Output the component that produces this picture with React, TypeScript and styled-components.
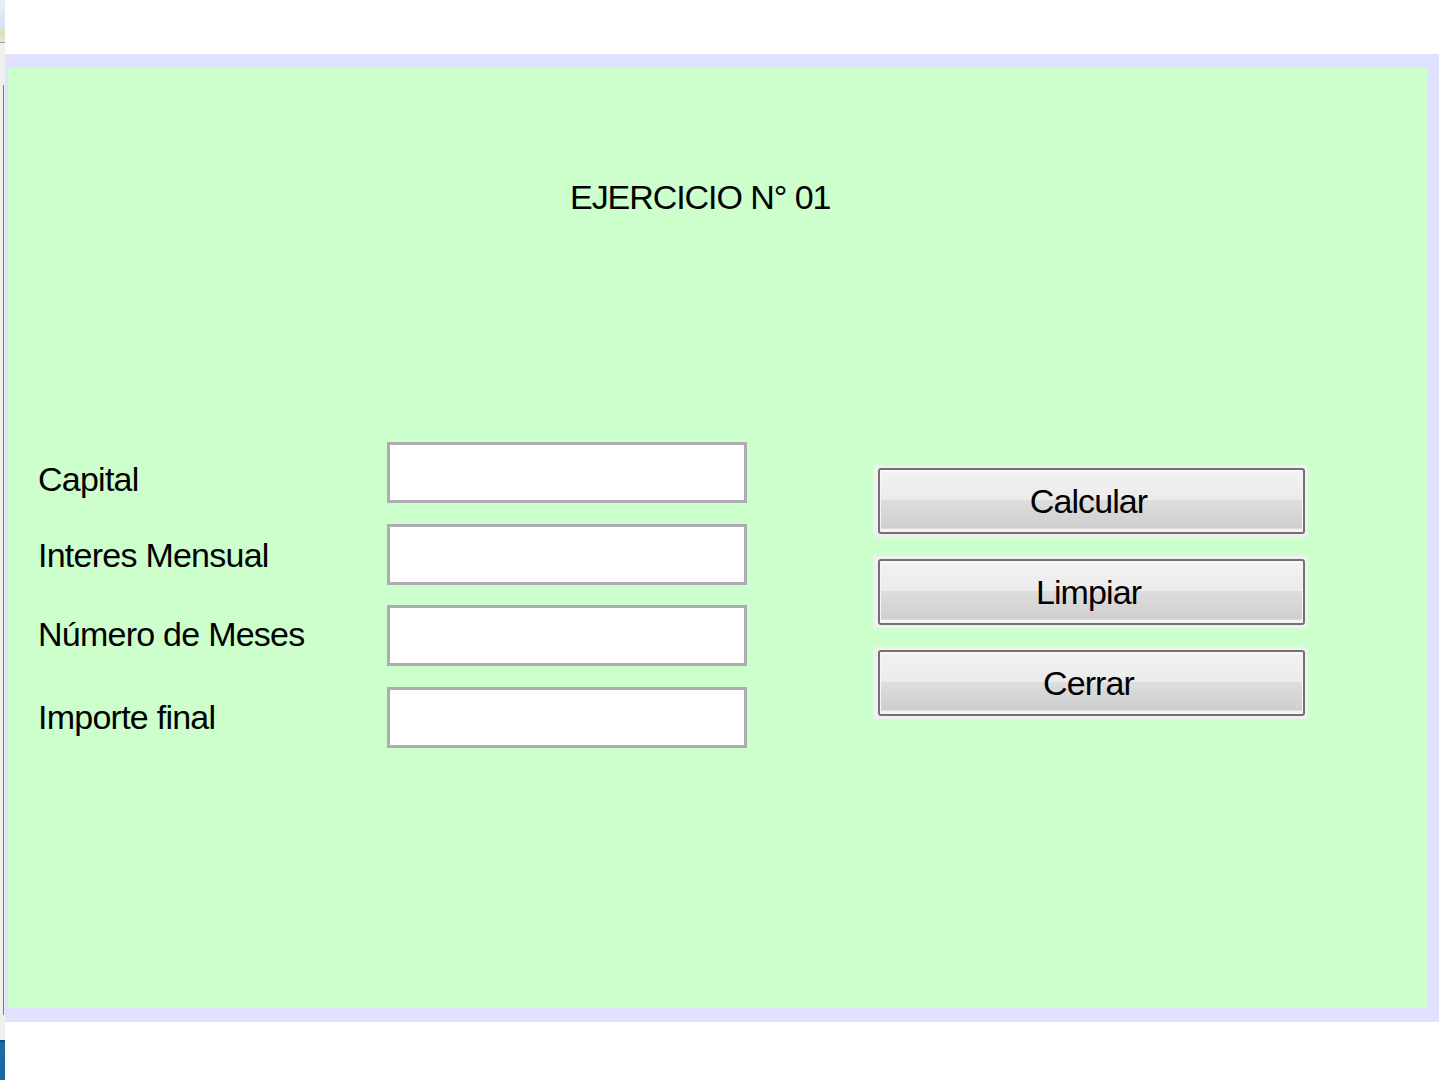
import React from "react";
import styled, { createGlobalStyle } from "styled-components";

const GlobalStyle = createGlobalStyle`
  html, body, #root {
    margin: 0;
    padding: 0;
    height: 100%;
    background: #ffffff;
  }
  body {
    font-family: "Liberation Sans", Arial, sans-serif;
  }
  * { box-sizing: border-box; }
`;

const Page = styled.div`
  display: flex;
  width: 1450px;
  height: 1080px;
  background: #ffffff;
  overflow: hidden;
`;

const LeftStrip = styled.div`
  width: 5px;
  display: flex;
  flex-direction: column;
  flex-shrink: 0;
`;

const StripTop = styled.div`
  height: 43px;
  background: linear-gradient(180deg, #e6f0fa 0%, #d6e4f2 60%, #e4e0a8 80%, #dfe7f0 100%);
  border-bottom: 1px solid #9a9a9a;
`;

const StripBody = styled.div`
  flex: 1;
  background: #f0f0f0;
  display: flex;
  flex-direction: column;
  padding: 42px 0 25px 3px;
`;

const StripRail = styled.div`
  flex: 1;
  border-left: 1px solid #7a7a7a;
`;

const StripBottom = styled.div`
  height: 40px;
  background: linear-gradient(180deg, #0f4470 0px, #1d6ca6 3px, #1a67a0 100%);
`;

const Main = styled.div`
  flex: 1;
  display: flex;
  flex-direction: column;
  padding: 54px 11px 58px 0;
`;

const WindowFrame = styled.div`
  flex: 1;
  background: #e0e0ff;
  padding: 13px 12px 14px 3px;
  display: flex;
`;

const Panel = styled.div`
  flex: 1;
  background: #ccffcc;
  display: flex;
  flex-direction: column;
  padding: 110px 0 0 30px;
`;

const Title = styled.div`
  height: 40px;
  line-height: 40px;
  font-size: 34px;
  letter-spacing: -1.05px;
  color: #000000;
  padding-left: 532px;
  white-space: nowrap;
`;

const FormArea = styled.div`
  margin-top: 225px;
  display: flex;
  align-items: flex-start;
  gap: 126px;
`;

const FieldGrid = styled.div`
  display: grid;
  grid-template-columns: 349px 360px;
  grid-auto-rows: 61px;
  row-gap: 20.5px;
`;

const Label = styled.div<{ $shift?: number }>`
  display: flex;
  align-items: center;
  font-size: 34px;
  letter-spacing: -0.75px;
  color: #000000;
  white-space: nowrap;
  transform: translateY(${(p) => p.$shift ?? 0}px);
`;

const Field = styled.input`
  width: 360px;
  height: 61px;
  border: 3px solid #acacb2;
  background: #ffffff;
  outline: none;
  font-size: 30px;
  font-family: "Liberation Sans", Arial, sans-serif;
  padding: 0 8px;
`;

const ButtonColumn = styled.div`
  margin-top: 23px;
  display: flex;
  flex-direction: column;
  gap: 19px;
`;

const ButtonFrame = styled.div`
  width: 435px;
  height: 72px;
  background: #f0f0f0;
  padding: 3px 3px 3px 5px;
  display: flex;
`;

const Button = styled.button`
  flex: 1;
  border: 2px solid #727272;
  border-radius: 3px;
  background: linear-gradient(
    180deg,
    #fbfbfb 0px,
    #f2f2f2 3px,
    #ebebeb 48%,
    #dddddd 49%,
    #cfcfcf 94%,
    #f4f4f4 95%,
    #f4f4f4 100%
  );
  box-shadow: inset 1px 0 0 #f6f6f6, inset -1px 0 0 #f6f6f6;
  font-family: "Liberation Sans", Arial, sans-serif;
  font-size: 34px;
  letter-spacing: -0.9px;
  color: #000000;
  padding: 0 6px 0 0;
  cursor: pointer;
`;

const fields = [
  { label: "Capital", shift: 7 },
  { label: "Interes Mensual", shift: 1 },
  { label: "Número de Meses", shift: -1 },
  { label: "Importe final", shift: 0 },
];

const buttons = ["Calcular", "Limpiar", "Cerrar"];

export default function App() {
  return (
    <>
      <GlobalStyle />
      <Page>
        <LeftStrip>
          <StripTop />
          <StripBody>
            <StripRail />
          </StripBody>
          <StripBottom />
        </LeftStrip>
        <Main>
          <WindowFrame>
            <Panel>
              <Title>EJERCICIO N° 01</Title>
              <FormArea>
                <FieldGrid>
                  {fields.map((f) => (
                    <React.Fragment key={f.label}>
                      <Label $shift={f.shift}>{f.label}</Label>
                      <Field type="text" aria-label={f.label} />
                    </React.Fragment>
                  ))}
                </FieldGrid>
                <ButtonColumn>
                  {buttons.map((b) => (
                    <ButtonFrame key={b}>
                      <Button type="button">{b}</Button>
                    </ButtonFrame>
                  ))}
                </ButtonColumn>
              </FormArea>
            </Panel>
          </WindowFrame>
        </Main>
      </Page>
    </>
  );
}
